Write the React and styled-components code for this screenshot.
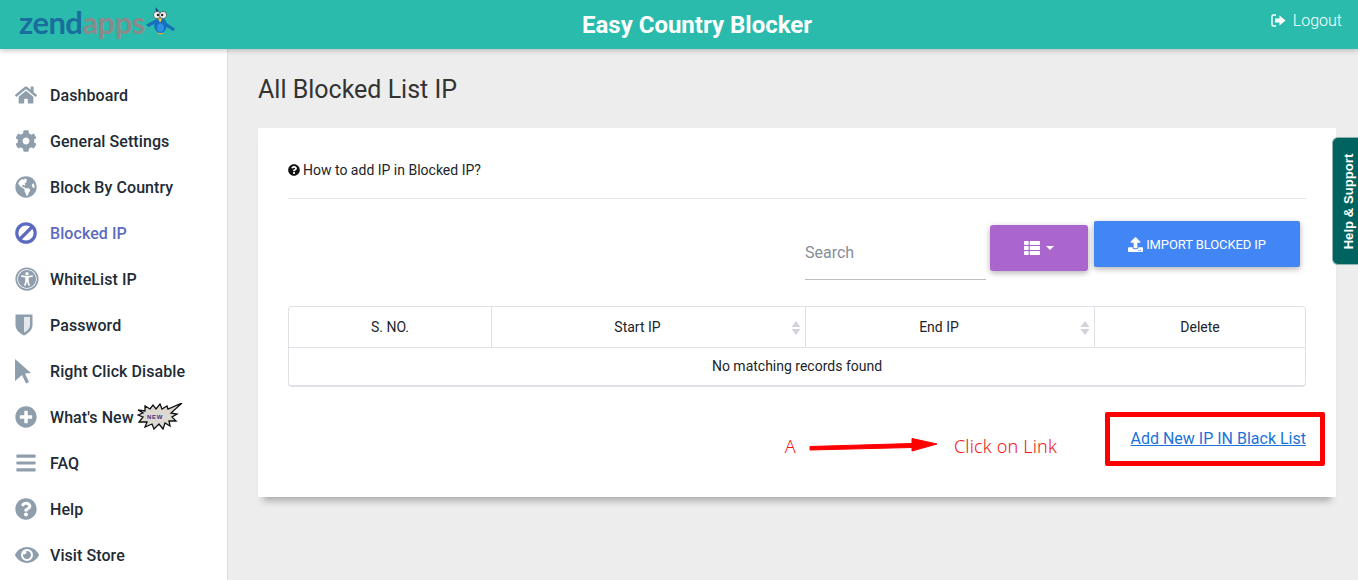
import React from "react";
import styled, { createGlobalStyle } from "styled-components";
import {
  FaHome,
  FaCog,
  FaGlobeAmericas,
  FaUniversalAccess,
  FaPlusCircle,
  FaBars,
  FaQuestionCircle,
  FaEye,
  FaThList,
  FaUpload,
} from "react-icons/fa";

const GlobalStyle = createGlobalStyle`
  html, body {
    margin: 0;
    height: 100%;
    overflow: hidden;
    background: #ededed;
    font-family: Roboto, sans-serif;
  }
  * { box-sizing: border-box; }
`;

const Page = styled.div`
  position: relative;
  width: 1358px;
  height: 580px;
  overflow: hidden;
`;

const Header = styled.header`
  position: relative;
  z-index: 2;
  display: grid;
  grid-template-columns: 1fr auto 1fr;
  height: 49px;
  background: #2bbbad;
  box-shadow: 0 2px 5px rgba(0, 0, 0, 0.2);
`;

const Logo = styled.div`
  display: flex;
  align-items: flex-start;
  padding: 3px 0 0 19px;
`;

const LogoText = styled.span`
  font-family: Lato, sans-serif;
  font-size: 31px;
  font-weight: 700;
  line-height: 38px;
  letter-spacing: -0.55px;
  color: ${(p) => p.$color};
`;

const AppTitle = styled.div`
  padding: 8px 0 0 36px;
  font-size: 24px;
  line-height: 34px;
  font-weight: 700;
  color: #fff;
`;

const Logout = styled.div`
  justify-self: end;
  display: flex;
  align-items: center;
  gap: 7px;
  height: 40px;
  padding-right: 16px;
  font-size: 16px;
  font-weight: 300;
  color: #fff;
`;

const Body = styled.div`
  display: flex;
  height: 531px;
`;

const Sidebar = styled.nav`
  flex: 0 0 228px;
  padding-top: 23px;
  background: #fff;
  border-right: 1px solid #dedede;
`;

const NavItem = styled.div`
  display: flex;
  align-items: center;
  height: 46px;
  padding-left: 15px;
  font-size: 16px;
  font-weight: 500;
  letter-spacing: 0.07px;
  color: ${(p) => (p.$active ? "#5c6bc0" : "#212b36")};
`;

const NavIcon = styled.span`
  flex: 0 0 35px;
  display: flex;
  align-items: center;
  font-size: ${(p) => p.$size || 22}px;
  color: ${(p) => (p.$active ? "#5c6bc0" : "#8f9eac")};
`;

const Burst = styled.svg`
  margin-left: 3px;
  margin-top: -1px;
`;

const Main = styled.main`
  flex: 1;
  padding: 24px 22px 0 30px;
`;

const Title = styled.h1`
  margin: 0 0 22px;
  font-size: 25px;
  line-height: 33px;
  font-weight: 400;
  color: #333;
`;

const Card = styled.section`
  height: 369px;
  padding: 32px 30px 0;
  background: #fff;
  box-shadow: 0 9px 7px -5px rgba(0, 0, 0, 0.28);
`;

const HelpLine = styled.div`
  display: flex;
  align-items: center;
  gap: 3px;
  height: 39px;
  padding-bottom: 19px;
  border-bottom: 1px solid #e4e4e4;
  font-size: 14px;
  color: #212529;
`;

const Toolbar = styled.div`
  display: flex;
  justify-content: flex-end;
  align-items: flex-start;
  height: 107px;
  padding: 22px 6px 0 0;
`;

const Search = styled.div`
  width: 181px;
  height: 59px;
  margin-right: 4px;
  padding-top: 22px;
  border-bottom: 1px solid #bdbdbd;
  font-size: 16px;
  line-height: 19px;
  color: #868e96;
`;

const ViewButton = styled.div`
  display: flex;
  align-items: center;
  justify-content: center;
  gap: 6px;
  width: 98px;
  height: 46px;
  margin: 4px 6px 0 0;
  border-radius: 3px;
  background: #aa66cc;
  color: #fff;
  font-size: 17px;
  box-shadow: 0 2px 5px rgba(0, 0, 0, 0.2), 0 2px 8px rgba(0, 0, 0, 0.12);
`;

const Caret = styled.span`
  width: 0;
  height: 0;
  border-left: 4px solid transparent;
  border-right: 4px solid transparent;
  border-top: 4px solid #fff;
`;

const ImportButton = styled.div`
  display: flex;
  align-items: center;
  justify-content: center;
  gap: 3px;
  width: 206px;
  height: 46px;
  border-radius: 2px;
  background: #4285f4;
  color: #fff;
  font-size: 13px;
  letter-spacing: -0.1px;
  box-shadow: 0 2px 5px rgba(0, 0, 0, 0.2), 0 2px 8px rgba(0, 0, 0, 0.12);
`;

const Table = styled.div`
  height: 81px;
  border: 1px solid #dee2e6;
  border-bottom-width: 2px;
  border-radius: 4px;
  font-size: 14px;
  color: #212529;
`;

const HeadRow = styled.div`
  display: grid;
  grid-template-columns: 202px 314px 289px 1fr;
  height: 41px;
  border-bottom: 1px solid #dee2e6;
`;

const HeadCell = styled.div`
  position: relative;
  display: flex;
  align-items: center;
  justify-content: center;
  padding-right: ${(p) => (p.$sortable ? 22 : 0)}px;
  & + & {
    border-left: 1px solid #dee2e6;
  }
`;

const SortMark = styled.svg`
  position: absolute;
  right: 4px;
  top: 14px;
`;

const EmptyRow = styled.div`
  text-align: center;
  line-height: 37px;
`;

const Annotation = styled.div`
  display: flex;
  align-items: flex-start;
  margin: 25px -19px 0 0;
  justify-content: flex-end;
`;

const RedNote = styled.span`
  font-family: "Noto Sans", sans-serif;
  font-size: 18px;
  font-weight: 300;
  line-height: 24px;
  letter-spacing: 0.17px;
  color: #f01818;
`;

const NoteRow = styled.div`
  display: flex;
  align-items: center;
  height: 24px;
  margin: 22px 48px 0 0;
`;

const Arrow = styled.svg`
  margin: 0 15px 0 11px;
`;

const LinkBox = styled.div`
  display: flex;
  align-items: center;
  justify-content: flex-end;
  width: 220px;
  height: 54px;
  padding: 0 14px 2px 0;
  border: 5px solid #ff0000;
  border-radius: 2px;
`;

const AddLink = styled.a`
  font-size: 16px;
  color: #1a73d9;
  text-decoration: underline;
`;

const HelpTab = styled.div`
  position: absolute;
  top: 137px;
  right: 0;
  z-index: 3;
  display: flex;
  align-items: center;
  justify-content: center;
  width: 26px;
  height: 128px;
  border: 1px solid #8fb5b3;
  border-right: 0;
  border-radius: 6px 0 0 6px;
  background: #00635f;
`;

const HelpTabText = styled.span`
  margin-left: 6px;
  transform: rotate(-90deg);
  white-space: nowrap;
  font-family: "Liberation Sans", sans-serif;
  font-size: 13px;
  font-weight: 700;
  letter-spacing: 0.08px;
  color: #fff;
`;

const Bird = () => (
  <svg width="29" height="30" viewBox="0 0 34 32" style={{ marginLeft: 1, marginTop: 3 }}>
    <path d="M0 20 L14 13 L16 16 L3 23 Z" fill="#1a6fb5" />
    <path d="M22 17 L34 25 L32 28 L21 21 Z" fill="#1a6fb5" />
    <ellipse cx="17" cy="21" rx="7.5" ry="9" fill="#1570c4" />
    <ellipse cx="17" cy="24" rx="4" ry="5" fill="#2f8fe0" />
    <path d="M11 0 L15 4 L12 7 Z" fill="#123f86" />
    <circle cx="13" cy="9" r="4.2" fill="#f2f2f2" stroke="#444" strokeWidth="0.8" />
    <circle cx="20" cy="9" r="4.2" fill="#f2f2f2" stroke="#444" strokeWidth="0.8" />
    <circle cx="14" cy="9" r="1.4" fill="#222" />
    <circle cx="19" cy="9" r="1.4" fill="#222" />
    <path d="M14 13 L19 13 L16.5 18 Z" fill="#f5c518" />
    <path d="M14 30 h6 v1.5 h-6 Z" fill="#d8b13a" />
  </svg>
);

const NewBurst = () => (
  <Burst width="46" height="27" viewBox="0 0 46 27">
    <polygon
      points="1,7 8,8 8,3 13,6 16,2 19,6 23,1 25,6 30,3 31,6 45,0 34,10 40,11 35,14 39,18 32,18 33,23 28,20 26,26 22,21 17,26 15,21 8,24 10,19 2,19 6,14 1,12 6,10"
      fill="#dcd8d2"
      stroke="#111"
      strokeWidth="1.3"
    />
    <text x="10" y="15.5" fontFamily="Liberation Sans, sans-serif" fontSize="6" fontWeight="700" letterSpacing="0.7" fill="#4a2a80">
      NEW
    </text>
  </Burst>
);

const BanIcon = () => (
  <svg width="22" height="22" viewBox="0 0 22 22">
    <circle cx="11" cy="11" r="9.2" fill="none" stroke="currentColor" strokeWidth="3.2" />
    <path d="M4.5 17.5 L17.5 4.5" stroke="currentColor" strokeWidth="3.2" />
  </svg>
);

const HalfShield = () => (
  <svg width="18" height="22" viewBox="0 0 18 22">
    <path d="M0.5 0.5 H17.5 V11 C17.5 16 13 19.5 9 21.5 C5 19.5 0.5 16 0.5 11 Z" fill="currentColor" />
    <path d="M9 3 H15 V11 C15 14.5 12 17 9 18.6 Z" fill="#e4e8ec" />
  </svg>
);

const PointerIcon = () => (
  <svg width="17" height="25" viewBox="0 0 17 25">
    <path d="M0 0 L16 14 L10 14.5 L14 23 L11 24.5 L7 16 L0 22 Z" fill="currentColor" />
  </svg>
);

const LogoutIcon = () => (
  <svg width="15" height="13" viewBox="0 0 15 13">
    <path d="M5 1 H2.5 A1.5 1.5 0 0 0 1 2.5 V10.5 A1.5 1.5 0 0 0 2.5 12 H5" fill="none" stroke="#fff" strokeWidth="1.4" />
    <path d="M4 4.5 H8.5 V1.5 L14.5 6.5 L8.5 11.5 V8.5 H4 Z" fill="#fff" />
  </svg>
);

const navItems = [
  { label: "Dashboard", icon: FaHome },
  { label: "General Settings", icon: FaCog },
  { label: "Block By Country", icon: FaGlobeAmericas },
  { label: "Blocked IP", icon: BanIcon, active: true },
  { label: "WhiteList IP", icon: FaUniversalAccess, size: 24 },
  { label: "Password", icon: HalfShield },
  { label: "Right Click Disable", icon: PointerIcon },
  { label: "What's New", icon: FaPlusCircle, burst: true },
  { label: "FAQ", icon: FaBars },
  { label: "Help", icon: FaQuestionCircle },
  { label: "Visit Store", icon: FaEye, size: 24 },
];

const columns = [
  { label: "S. NO." },
  { label: "Start IP", sortable: true },
  { label: "End IP", sortable: true },
  { label: "Delete" },
];

export default function App() {
  return (
    <Page>
      <GlobalStyle />
      <Header>
        <Logo>
          <LogoText $color="#1a6e9e">zend</LogoText>
          <LogoText $color="#8a8a8a">apps</LogoText>
          <Bird />
        </Logo>
        <AppTitle>Easy Country Blocker</AppTitle>
        <Logout>
          <LogoutIcon />
          Logout
        </Logout>
      </Header>
      <Body>
        <Sidebar>
          {navItems.map((item) => (
            <NavItem key={item.label} $active={item.active}>
              <NavIcon $active={item.active} $size={item.size}>
                <item.icon />
              </NavIcon>
              {item.label}
              {item.burst && <NewBurst />}
            </NavItem>
          ))}
        </Sidebar>
        <Main>
          <Title>All Blocked List IP</Title>
          <Card>
            <HelpLine>
              <FaQuestionCircle size={12} color="#111" />
              How to add IP in Blocked IP?
            </HelpLine>
            <Toolbar>
              <Search>Search</Search>
              <ViewButton>
                <FaThList size={16} />
                <Caret />
              </ViewButton>
              <ImportButton>
                <FaUpload size={15} />
                IMPORT BLOCKED IP
              </ImportButton>
            </Toolbar>
            <Table>
              <HeadRow>
                {columns.map((col) => (
                  <HeadCell key={col.label} $sortable={col.sortable}>
                    {col.label}
                    {col.sortable && (
                      <SortMark width="10" height="14" viewBox="0 0 10 14">
                        <path d="M5 0 L9.5 6 H0.5 Z M5 14 L0.5 8 H9.5 Z" fill="#d0d4d8" />
                      </SortMark>
                    )}
                  </HeadCell>
                ))}
              </HeadRow>
              <EmptyRow>No matching records found</EmptyRow>
            </Table>
            <Annotation>
              <NoteRow>
                <RedNote>A</RedNote>
                <Arrow width="132" height="16" viewBox="0 0 132 16">
                  <path d="M3 8.5 L105 5.5 L105 0.5 L130 6 L105 13 L105 9.5 L3 12 Z" fill="#ff0000" stroke="#ff0000" strokeLinejoin="round" />
                </Arrow>
                <RedNote>Click on Link</RedNote>
              </NoteRow>
              <LinkBox>
                <AddLink>Add New IP IN Black List</AddLink>
              </LinkBox>
            </Annotation>
          </Card>
        </Main>
      </Body>
      <HelpTab>
        <HelpTabText>Help &amp; Support</HelpTabText>
      </HelpTab>
    </Page>
  );
}
